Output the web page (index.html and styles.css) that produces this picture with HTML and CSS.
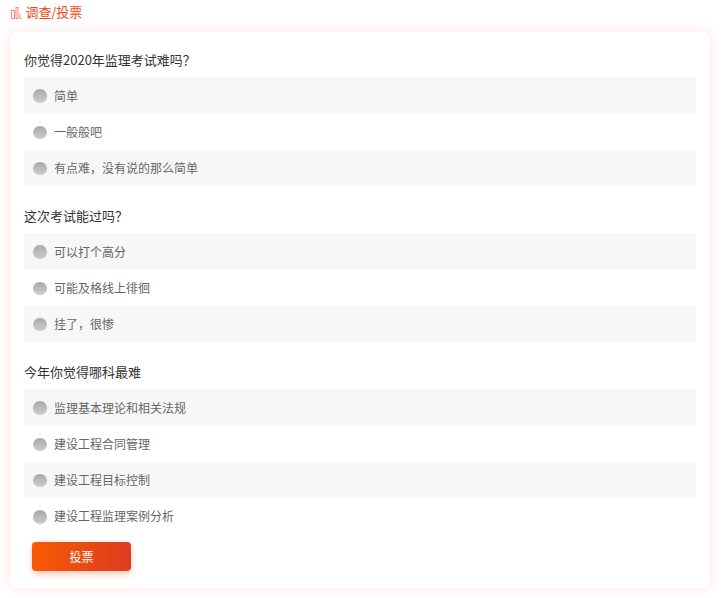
FILE: index.html
```html
<!DOCTYPE html>
<html lang="zh">
<head>
<meta charset="utf-8">
<title>调查/投票</title>
<link rel="stylesheet" href="styles.css">
</head>
<body>
<header class="head">
<svg class="head-icon" width="11" height="12" viewBox="0 0 11 12" fill="none" stroke="#f08a70" stroke-width="1"><rect x="0.5" y="3.5" width="3" height="8"/><rect x="5" y="0.5" width="2" height="11"/><path d="M9 7v4.5h1.5"/></svg>
<span class="head-title">调查/投票</span>
</header>
<main class="card">
<section class="q">
<h2 class="q-title">你觉得2020年监理考试难吗？</h2>
<div class="opt"><i class="radio"></i><span>简单</span></div>
<div class="opt"><i class="radio"></i><span>一般般吧</span></div>
<div class="opt"><i class="radio"></i><span>有点难，没有说的那么简单</span></div>
</section>
<section class="q">
<h2 class="q-title">这次考试能过吗？</h2>
<div class="opt"><i class="radio"></i><span>可以打个高分</span></div>
<div class="opt"><i class="radio"></i><span>可能及格线上徘徊</span></div>
<div class="opt"><i class="radio"></i><span>挂了，很惨</span></div>
</section>
<section class="q">
<h2 class="q-title">今年你觉得哪科最难</h2>
<div class="opt"><i class="radio"></i><span>监理基本理论和相关法规</span></div>
<div class="opt"><i class="radio"></i><span>建设工程合同管理</span></div>
<div class="opt"><i class="radio"></i><span>建设工程目标控制</span></div>
<div class="opt"><i class="radio"></i><span>建设工程监理案例分析</span></div>
</section>
<button class="vote" type="button">投票</button>
</main>
</body>
</html>
```
FILE: styles.css
```css
* { box-sizing: border-box; }
html, body { margin: 0; padding: 0; }
body {
  width: 723px;
  height: 598px;
  overflow: hidden;
  background: #fff;
  font-family: "Noto Sans CJK SC", "Liberation Sans", sans-serif;
  padding: 0 13px 0 10px;
}
.head {
  height: 32px;
  display: flex;
  align-items: center;
  padding-bottom: 6px;
  padding-left: 1px;
}
.head-icon { margin-right: 4px; }
.head-title { font-size: 13px; letter-spacing: -0.1px; color: #ee4a18; line-height: 20px; margin-left: -0.5px; margin-bottom: 2px; }
.card {
  height: 556px;
  background: #fff;
  border-radius: 6px;
  box-shadow: 0 0 12px rgba(255, 90, 40, 0.16);
  padding: 18px 14px 0;
}
.q { margin-bottom: 20.25px; }
.q:last-of-type { margin-bottom: 8px; }
.q-title {
  margin: 0;
  height: 27px;
  font-size: 13px;
  font-weight: 400;
  line-height: 20px;
  color: #333;
}
.opt {
  height: 36.25px;
  display: flex;
  align-items: center;
  padding-left: 9px;
  font-size: 12px;
  color: #666;
}
.opt:nth-child(even) { background: #f7f7f7; }
.radio {
  width: 13.5px;
  height: 13.5px;
  border-radius: 50%;
  background: linear-gradient(#aaa, #ccc);
  margin: 2px 8px 0 0;
}
.opt span { margin-left: -0.5px; }
.vote {
  display: block;
  width: 99px;
  height: 29px;
  margin-left: 8px;
  border: 0;
  border-radius: 4px;
  background: linear-gradient(90deg, #f85a05, #dc3c20);
  box-shadow: 0 3px 6px rgba(230, 70, 20, 0.3);
  color: #fff;
  font: 12px "Noto Sans CJK SC", sans-serif;
  padding: 0;
}
```
